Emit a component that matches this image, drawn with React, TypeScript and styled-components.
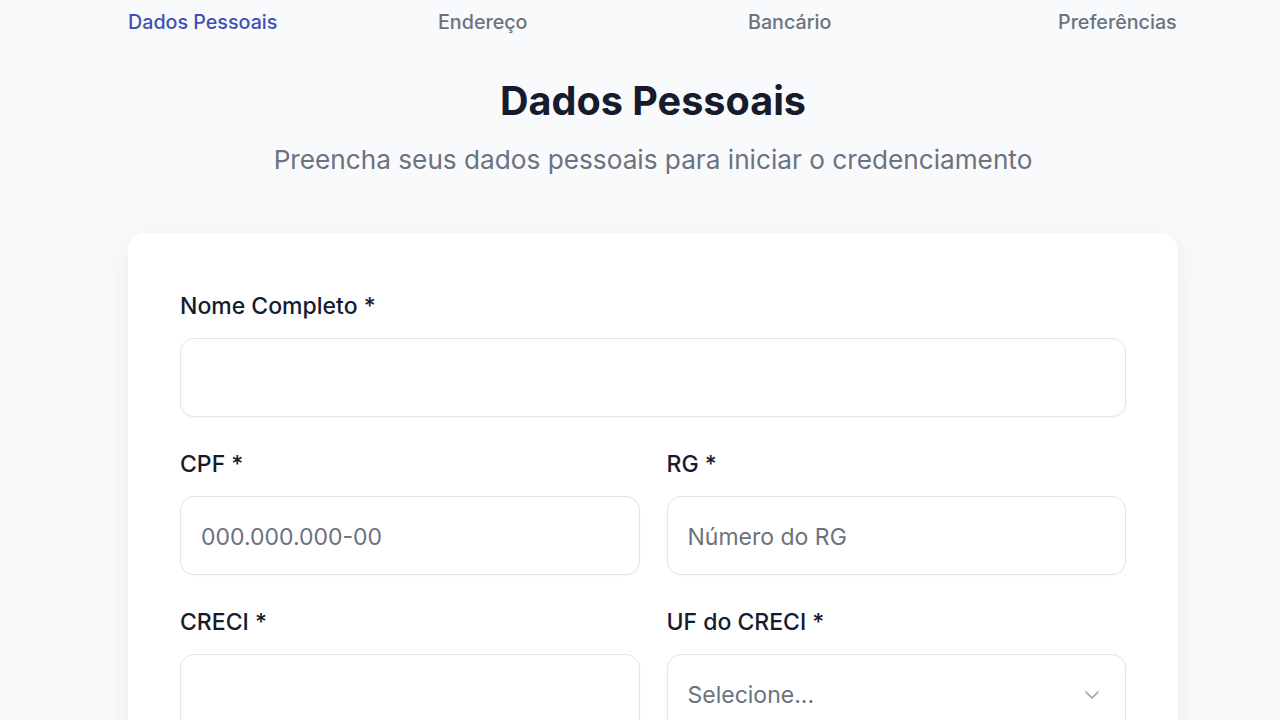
import React from "react";
import styled, { createGlobalStyle } from "styled-components";

const GlobalStyle = createGlobalStyle`
  html, body { margin: 0; padding: 0; background: #f9fafb; }
  body { font-family: Inter, "Noto Sans", sans-serif; color: #111827; }
  * { box-sizing: border-box; }
`;

const Page = styled.div`
  width: 1050px;
  margin-left: 128px;
  padding-top: 8px;
`;

const Steps = styled.nav`
  display: grid;
  grid-template-columns: 310px 310px 310px auto;
`;

const StepLabel = styled.span<{ $active?: boolean }>`
  font-size: 19.7px;
  line-height: 28px;
  font-weight: 500;
  color: ${(p) => (p.$active ? "#4150b5" : "#6b7280")};
  white-space: nowrap;
`;

const Header = styled.header`
  display: flex;
  flex-direction: column;
  align-items: center;
  margin-top: 41px;
`;

const Title = styled.h1`
  margin: 0;
  font-size: 39.6px;
  line-height: 48px;
  font-weight: 700;
  color: #161b2e;
`;

const Subtitle = styled.p`
  margin: 18px 0 0;
  font-size: 26.2px;
  line-height: 34px;
  color: #6b7280;
`;

const Card = styled.section`
  margin-top: 56px;
  background: #ffffff;
  border-radius: 18px;
  box-shadow: 0 8px 30px rgba(17, 24, 39, 0.07);
  padding: 57px 52px 52px;
  display: flex;
  flex-direction: column;
  gap: 31.5px;
`;

const Row = styled.div<{ $cols?: number }>`
  display: grid;
  grid-template-columns: repeat(${(p) => p.$cols ?? 1}, 1fr);
  column-gap: 27px;
`;

const Field = styled.label`
  display: flex;
  flex-direction: column;
  gap: 16px;
`;

const LabelText = styled.span`
  font-size: 23px;
  line-height: 32px;
  font-weight: 500;
  color: #161b2e;
`;

const TextInput = styled.input`
  height: 78.5px;
  width: 100%;
  border: 1.5px solid #e3e4ea;
  border-radius: 14px;
  background: #fff;
  padding: 4px 20px 0;
  font-family: Inter, "Noto Sans", sans-serif;
  font-size: 23px;
  color: #111827;
  box-shadow: 0 1px 2px rgba(17, 24, 39, 0.04);
  outline: none;
  &::placeholder { color: #6b7280; }
`;

const SelectWrap = styled.div`
  position: relative;
`;

const Select = styled.select`
  height: 78.5px;
  width: 100%;
  appearance: none;
  border: 1.5px solid #e3e4ea;
  border-radius: 14px;
  background: #fff;
  padding: 4px 20px 0;
  font-family: Inter, "Noto Sans", sans-serif;
  font-size: 23px;
  color: #6b7280;
  box-shadow: 0 1px 2px rgba(17, 24, 39, 0.04);
  outline: none;
`;

const Chevron = styled.svg`
  position: absolute;
  right: 22px;
  top: 50%;
  transform: translateY(-50%);
  margin-top: 2px;
  pointer-events: none;
`;

export default function App() {
  return (
    <>
      <GlobalStyle />
      <Page>
        <Steps>
          <StepLabel $active>Dados Pessoais</StepLabel>
          <StepLabel>Endereço</StepLabel>
          <StepLabel>Bancário</StepLabel>
          <StepLabel>Preferências</StepLabel>
        </Steps>
        <Header>
          <Title>Dados Pessoais</Title>
          <Subtitle>Preencha seus dados pessoais para iniciar o credenciamento</Subtitle>
        </Header>
        <Card>
          <Row>
            <Field>
              <LabelText>Nome Completo *</LabelText>
              <TextInput type="text" />
            </Field>
          </Row>
          <Row $cols={2}>
            <Field>
              <LabelText>CPF *</LabelText>
              <TextInput type="text" placeholder="000.000.000-00" />
            </Field>
            <Field>
              <LabelText>RG *</LabelText>
              <TextInput type="text" placeholder="Número do RG" />
            </Field>
          </Row>
          <Row $cols={2}>
            <Field>
              <LabelText>CRECI *</LabelText>
              <TextInput type="text" />
            </Field>
            <Field>
              <LabelText>UF do CRECI *</LabelText>
              <SelectWrap>
                <Select defaultValue="">
                  <option value="" disabled>
                    Selecione...
                  </option>
                  <option value="SP">SP</option>
                  <option value="RJ">RJ</option>
                  <option value="MG">MG</option>
                </Select>
                <Chevron width="24" height="24" viewBox="0 0 24 24" fill="none" stroke="#9ca3af" strokeWidth="1.6" strokeLinecap="round" strokeLinejoin="round">
                  <path d="M6 9l6 6 6-6" />
                </Chevron>
              </SelectWrap>
            </Field>
          </Row>
          <Row $cols={2}>
            <Field>
              <LabelText>E-mail *</LabelText>
              <TextInput type="email" placeholder="seu@email.com" />
            </Field>
            <Field>
              <LabelText>Telefone *</LabelText>
              <TextInput type="tel" placeholder="(00) 00000-0000" />
            </Field>
          </Row>
        </Card>
      </Page>
    </>
  );
}
